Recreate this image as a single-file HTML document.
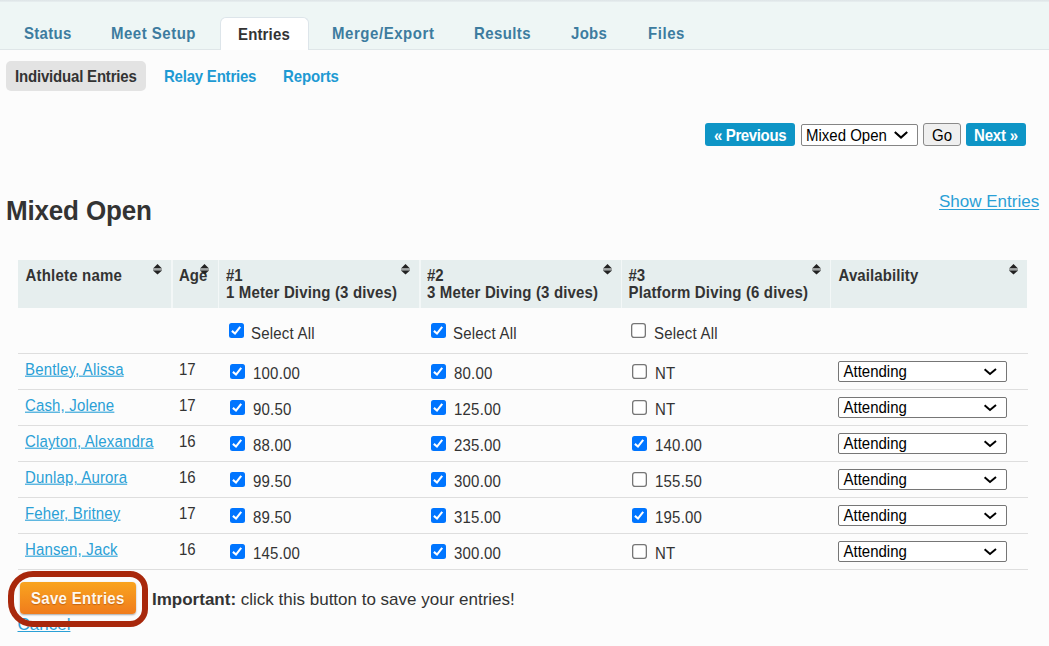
<!DOCTYPE html>
<html><head><meta charset="utf-8">
<style>
*{box-sizing:border-box}
html,body{margin:0;padding:0}
body{width:1049px;height:646px;overflow:hidden;position:relative;background:#fcfcfc;font-family:"Liberation Sans",sans-serif;color:#333;font-size:15px;line-height:17px}
.abs{position:absolute;white-space:nowrap}
.t{position:absolute;white-space:nowrap;transform:scaleY(1.1);transform-origin:0 8.5px}
.b{font-weight:bold}
.tabbar{position:absolute;left:0;top:0;width:1049px;height:50px;background:#eef6f5;border-bottom:1px solid #dfe6e8}
.tabbar:before{content:"";position:absolute;left:0;top:0;width:100%;height:2px;background:linear-gradient(#dde4e6,#e8eff0)}
.tab{font-weight:bold;color:#3d7c9f;letter-spacing:0.3px}
.acttab{position:absolute;left:220px;top:17px;width:89px;height:33px;background:#fff;border:1px solid #dde5ea;border-bottom:none;border-radius:6px 6px 0 0}
.pill{position:absolute;left:6px;top:61px;width:140px;height:30px;background:#e3e3e3;border-radius:5px}
.sub{font-weight:bold;color:#1e9ad3}
.btn{position:absolute;top:123px;height:23px;background:#0e95c6;border-radius:3px}
.wb{color:#fff;font-weight:bold}
.sel{position:absolute;background:#fff;border:1px solid #858585;border-radius:2px}
.k{color:#000}
.h2{font-size:26px;line-height:30px;font-weight:bold;color:#333;letter-spacing:-0.17px;transform:scaleY(1.055);transform-origin:0 6px}
.big{font-size:17px;line-height:20px;transform:none}
a,.lnk{color:#2aa0d6}
.th{position:absolute;top:260px;height:48px;background:#e6eeee}
.sort{position:absolute}
.line{position:absolute;left:18px;width:1010px;height:1px;background:#dedede}
.cb{position:absolute}
.name{color:#2aa0d6;text-decoration:underline;text-underline-offset:0.8px;letter-spacing:0.15px}
.ds{position:absolute;left:838px;width:169px;height:21px;background:#fff;border:1px solid #767676;border-radius:2px}
</style></head>
<body>
<div class="tabbar"></div>
<div class="acttab"></div>

<div class="t tab" style="left:24px;top:24px;">Status</div>
<div class="t tab" style="left:111px;top:24px;letter-spacing:0.5px">Meet Setup</div>
<div class="t tab" style="left:238px;top:25px;color:#333;letter-spacing:0.15px">Entries</div>
<div class="t tab" style="left:332px;top:24px;letter-spacing:0.55px">Merge/Export</div>
<div class="t tab" style="left:474px;top:24px;letter-spacing:0.4px">Results</div>
<div class="t tab" style="left:571px;top:24px;">Jobs</div>
<div class="t tab" style="left:648px;top:24px;letter-spacing:0.55px">Files</div>
<div class="pill"></div>
<div class="t sub" style="left:15px;top:67px;color:#333;letter-spacing:-0.19px">Individual Entries</div>
<div class="t sub" style="left:164px;top:67px;letter-spacing:-0.22px">Relay Entries</div>
<div class="t sub" style="left:283px;top:67px;letter-spacing:-0.12px">Reports</div>
<div class="btn" style="left:705px;width:90px"></div>
<div class="t wb" style="left:714px;top:126px;letter-spacing:-0.37px">« Previous</div>
<div class="sel" style="left:801px;top:124px;width:117px;height:22px"></div>
<div class="t k" style="left:806px;top:126px;">Mixed Open</div>
<svg class="abs" style="left:893px;top:130px" width="16" height="10" viewBox="0 0 16 10"><path d="M1.8 2 L8 7.6 L14.2 2" fill="none" stroke="#000" stroke-width="2.1"/></svg>
<div class="abs" style="left:923px;top:123px;width:38px;height:23px;background:#efefef;border:1px solid #8a8a8a;border-radius:3px"></div>
<div class="t k" style="left:932px;top:126px;">Go</div>
<div class="btn" style="left:966px;width:60px"></div>
<div class="t wb" style="left:974px;top:126px;letter-spacing:-0.2px">Next »</div>
<div class="t h2" style="left:6px;top:195px;">Mixed Open</div>
<div class="t big lnk" style="left:939px;top:192px;text-decoration:underline;text-underline-offset:1.8px">Show Entries</div>
<div class="th" style="left:18px;width:1009px;background:#f3f7f7"></div>
<div class="th" style="left:18px;width:153px"></div>
<div class="th" style="left:173px;width:45px"></div>
<div class="th" style="left:219px;width:200px"></div>
<div class="th" style="left:421px;width:200px"></div>
<div class="th" style="left:622px;width:208px"></div>
<div class="th" style="left:831px;width:196px"></div>
<div class="t b" style="left:25.5px;top:266px;letter-spacing:0.2px">Athlete name</div>
<div class="t b" style="left:179px;top:266px;">Age</div>
<div class="t b" style="left:226px;top:266px;">#1</div>
<div class="t b" style="left:226px;top:283px;letter-spacing:0.15px">1 Meter Diving (3 dives)</div>
<div class="t b" style="left:427px;top:266px;">#2</div>
<div class="t b" style="left:427px;top:283px;letter-spacing:0.15px">3 Meter Diving (3 dives)</div>
<div class="t b" style="left:628.5px;top:266px;">#3</div>
<div class="t b" style="left:628.5px;top:283px;letter-spacing:0.15px">Platform Diving (6 dives)</div>
<div class="t b" style="left:838.5px;top:266px;letter-spacing:0.1px">Availability</div>
<svg class="sort" style="left:153px;top:264px" width="9" height="11" viewBox="0 0 9 11"><path d="M4.5 0 L9 4.4 L0 4.4 Z" fill="#222"/><rect x="0" y="4.4" width="9" height="2.2" fill="#9fa3a3"/><path d="M0 6.6 L9 6.6 L4.5 10.6 Z" fill="#222"/></svg>
<svg class="sort" style="left:200px;top:264px" width="9" height="11" viewBox="0 0 9 11"><path d="M4.5 0 L9 4.4 L0 4.4 Z" fill="#222"/><rect x="0" y="4.4" width="9" height="2.2" fill="#9fa3a3"/><path d="M0 6.6 L9 6.6 L4.5 10.6 Z" fill="#222"/></svg>
<svg class="sort" style="left:401px;top:264px" width="9" height="11" viewBox="0 0 9 11"><path d="M4.5 0 L9 4.4 L0 4.4 Z" fill="#222"/><rect x="0" y="4.4" width="9" height="2.2" fill="#9fa3a3"/><path d="M0 6.6 L9 6.6 L4.5 10.6 Z" fill="#222"/></svg>
<svg class="sort" style="left:603px;top:264px" width="9" height="11" viewBox="0 0 9 11"><path d="M4.5 0 L9 4.4 L0 4.4 Z" fill="#222"/><rect x="0" y="4.4" width="9" height="2.2" fill="#9fa3a3"/><path d="M0 6.6 L9 6.6 L4.5 10.6 Z" fill="#222"/></svg>
<svg class="sort" style="left:812px;top:264px" width="9" height="11" viewBox="0 0 9 11"><path d="M4.5 0 L9 4.4 L0 4.4 Z" fill="#222"/><rect x="0" y="4.4" width="9" height="2.2" fill="#9fa3a3"/><path d="M0 6.6 L9 6.6 L4.5 10.6 Z" fill="#222"/></svg>
<svg class="sort" style="left:1009px;top:264px" width="9" height="11" viewBox="0 0 9 11"><path d="M4.5 0 L9 4.4 L0 4.4 Z" fill="#222"/><rect x="0" y="4.4" width="9" height="2.2" fill="#9fa3a3"/><path d="M0 6.6 L9 6.6 L4.5 10.6 Z" fill="#222"/></svg>
<svg class="cb" style="left:229px;top:323px" width="15" height="15" viewBox="0 0 15 15"><rect x="0" y="0" width="15" height="15" rx="2.5" fill="#0075ff"/><path d="M2.9 7.9 L6.0 10.6 L11.2 3.9" fill="none" stroke="#fff" stroke-width="2.1"/></svg>
<div class="t " style="left:251px;top:324px;letter-spacing:0.2px">Select All</div>
<svg class="cb" style="left:431px;top:323px" width="15" height="15" viewBox="0 0 15 15"><rect x="0" y="0" width="15" height="15" rx="2.5" fill="#0075ff"/><path d="M2.9 7.9 L6.0 10.6 L11.2 3.9" fill="none" stroke="#fff" stroke-width="2.1"/></svg>
<div class="t " style="left:453px;top:324px;letter-spacing:0.2px">Select All</div>
<svg class="cb" style="left:631px;top:323px" width="15" height="15" viewBox="0 0 15 15"><rect x="0.65" y="0.65" width="13.7" height="13.7" rx="2.3" fill="#fff" stroke="#767676" stroke-width="1.3"/></svg>
<div class="t " style="left:654px;top:324px;letter-spacing:0.2px">Select All</div>
<div class="line" style="top:353px"></div>
<div class="line" style="top:389px"></div>
<div class="line" style="top:425px"></div>
<div class="line" style="top:461px"></div>
<div class="line" style="top:497px"></div>
<div class="line" style="top:533px"></div>
<div class="line" style="top:569px"></div>
<div class="t name" style="left:25px;top:360px;">Bentley, Alissa</div>
<div class="t " style="left:179px;top:360px;">17</div>
<svg class="cb" style="left:230px;top:364px" width="15" height="15" viewBox="0 0 15 15"><rect x="0" y="0" width="15" height="15" rx="2.5" fill="#0075ff"/><path d="M2.9 7.9 L6.0 10.6 L11.2 3.9" fill="none" stroke="#fff" stroke-width="2.1"/></svg>
<div class="t " style="left:253px;top:364px;letter-spacing:0.2px">100.00</div>
<svg class="cb" style="left:431px;top:364px" width="15" height="15" viewBox="0 0 15 15"><rect x="0" y="0" width="15" height="15" rx="2.5" fill="#0075ff"/><path d="M2.9 7.9 L6.0 10.6 L11.2 3.9" fill="none" stroke="#fff" stroke-width="2.1"/></svg>
<div class="t " style="left:454px;top:364px;letter-spacing:0.2px">80.00</div>
<svg class="cb" style="left:632px;top:364px" width="15" height="15" viewBox="0 0 15 15"><rect x="0.65" y="0.65" width="13.7" height="13.7" rx="2.3" fill="#fff" stroke="#767676" stroke-width="1.3"/></svg>
<div class="t " style="left:655px;top:364px;letter-spacing:0.2px">NT</div>
<div class="ds" style="top:361px"></div>
<div class="t k" style="left:843.5px;top:362px;">Attending</div>
<svg class="abs" style="left:983px;top:365px" width="16" height="11" viewBox="0 0 16 11"><path d="M1.6 4.3 L7.0 8.9 L13.0 3.9" fill="none" stroke="#000" stroke-width="2"/></svg>
<div class="t name" style="left:25px;top:396px;">Cash, Jolene</div>
<div class="t " style="left:179px;top:396px;">17</div>
<svg class="cb" style="left:230px;top:400px" width="15" height="15" viewBox="0 0 15 15"><rect x="0" y="0" width="15" height="15" rx="2.5" fill="#0075ff"/><path d="M2.9 7.9 L6.0 10.6 L11.2 3.9" fill="none" stroke="#fff" stroke-width="2.1"/></svg>
<div class="t " style="left:253px;top:400px;letter-spacing:0.2px">90.50</div>
<svg class="cb" style="left:431px;top:400px" width="15" height="15" viewBox="0 0 15 15"><rect x="0" y="0" width="15" height="15" rx="2.5" fill="#0075ff"/><path d="M2.9 7.9 L6.0 10.6 L11.2 3.9" fill="none" stroke="#fff" stroke-width="2.1"/></svg>
<div class="t " style="left:454px;top:400px;letter-spacing:0.2px">125.00</div>
<svg class="cb" style="left:632px;top:400px" width="15" height="15" viewBox="0 0 15 15"><rect x="0.65" y="0.65" width="13.7" height="13.7" rx="2.3" fill="#fff" stroke="#767676" stroke-width="1.3"/></svg>
<div class="t " style="left:655px;top:400px;letter-spacing:0.2px">NT</div>
<div class="ds" style="top:397px"></div>
<div class="t k" style="left:843.5px;top:398px;">Attending</div>
<svg class="abs" style="left:983px;top:401px" width="16" height="11" viewBox="0 0 16 11"><path d="M1.6 4.3 L7.0 8.9 L13.0 3.9" fill="none" stroke="#000" stroke-width="2"/></svg>
<div class="t name" style="left:25px;top:432px;">Clayton, Alexandra</div>
<div class="t " style="left:179px;top:432px;">16</div>
<svg class="cb" style="left:230px;top:436px" width="15" height="15" viewBox="0 0 15 15"><rect x="0" y="0" width="15" height="15" rx="2.5" fill="#0075ff"/><path d="M2.9 7.9 L6.0 10.6 L11.2 3.9" fill="none" stroke="#fff" stroke-width="2.1"/></svg>
<div class="t " style="left:253px;top:436px;letter-spacing:0.2px">88.00</div>
<svg class="cb" style="left:431px;top:436px" width="15" height="15" viewBox="0 0 15 15"><rect x="0" y="0" width="15" height="15" rx="2.5" fill="#0075ff"/><path d="M2.9 7.9 L6.0 10.6 L11.2 3.9" fill="none" stroke="#fff" stroke-width="2.1"/></svg>
<div class="t " style="left:454px;top:436px;letter-spacing:0.2px">235.00</div>
<svg class="cb" style="left:632px;top:436px" width="15" height="15" viewBox="0 0 15 15"><rect x="0" y="0" width="15" height="15" rx="2.5" fill="#0075ff"/><path d="M2.9 7.9 L6.0 10.6 L11.2 3.9" fill="none" stroke="#fff" stroke-width="2.1"/></svg>
<div class="t " style="left:655px;top:436px;letter-spacing:0.2px">140.00</div>
<div class="ds" style="top:433px"></div>
<div class="t k" style="left:843.5px;top:434px;">Attending</div>
<svg class="abs" style="left:983px;top:437px" width="16" height="11" viewBox="0 0 16 11"><path d="M1.6 4.3 L7.0 8.9 L13.0 3.9" fill="none" stroke="#000" stroke-width="2"/></svg>
<div class="t name" style="left:25px;top:468px;">Dunlap, Aurora</div>
<div class="t " style="left:179px;top:468px;">16</div>
<svg class="cb" style="left:230px;top:472px" width="15" height="15" viewBox="0 0 15 15"><rect x="0" y="0" width="15" height="15" rx="2.5" fill="#0075ff"/><path d="M2.9 7.9 L6.0 10.6 L11.2 3.9" fill="none" stroke="#fff" stroke-width="2.1"/></svg>
<div class="t " style="left:253px;top:472px;letter-spacing:0.2px">99.50</div>
<svg class="cb" style="left:431px;top:472px" width="15" height="15" viewBox="0 0 15 15"><rect x="0" y="0" width="15" height="15" rx="2.5" fill="#0075ff"/><path d="M2.9 7.9 L6.0 10.6 L11.2 3.9" fill="none" stroke="#fff" stroke-width="2.1"/></svg>
<div class="t " style="left:454px;top:472px;letter-spacing:0.2px">300.00</div>
<svg class="cb" style="left:632px;top:472px" width="15" height="15" viewBox="0 0 15 15"><rect x="0.65" y="0.65" width="13.7" height="13.7" rx="2.3" fill="#fff" stroke="#767676" stroke-width="1.3"/></svg>
<div class="t " style="left:655px;top:472px;letter-spacing:0.2px">155.50</div>
<div class="ds" style="top:469px"></div>
<div class="t k" style="left:843.5px;top:470px;">Attending</div>
<svg class="abs" style="left:983px;top:473px" width="16" height="11" viewBox="0 0 16 11"><path d="M1.6 4.3 L7.0 8.9 L13.0 3.9" fill="none" stroke="#000" stroke-width="2"/></svg>
<div class="t name" style="left:25px;top:504px;">Feher, Britney</div>
<div class="t " style="left:179px;top:504px;">17</div>
<svg class="cb" style="left:230px;top:508px" width="15" height="15" viewBox="0 0 15 15"><rect x="0" y="0" width="15" height="15" rx="2.5" fill="#0075ff"/><path d="M2.9 7.9 L6.0 10.6 L11.2 3.9" fill="none" stroke="#fff" stroke-width="2.1"/></svg>
<div class="t " style="left:253px;top:508px;letter-spacing:0.2px">89.50</div>
<svg class="cb" style="left:431px;top:508px" width="15" height="15" viewBox="0 0 15 15"><rect x="0" y="0" width="15" height="15" rx="2.5" fill="#0075ff"/><path d="M2.9 7.9 L6.0 10.6 L11.2 3.9" fill="none" stroke="#fff" stroke-width="2.1"/></svg>
<div class="t " style="left:454px;top:508px;letter-spacing:0.2px">315.00</div>
<svg class="cb" style="left:632px;top:508px" width="15" height="15" viewBox="0 0 15 15"><rect x="0" y="0" width="15" height="15" rx="2.5" fill="#0075ff"/><path d="M2.9 7.9 L6.0 10.6 L11.2 3.9" fill="none" stroke="#fff" stroke-width="2.1"/></svg>
<div class="t " style="left:655px;top:508px;letter-spacing:0.2px">195.00</div>
<div class="ds" style="top:505px"></div>
<div class="t k" style="left:843.5px;top:506px;">Attending</div>
<svg class="abs" style="left:983px;top:509px" width="16" height="11" viewBox="0 0 16 11"><path d="M1.6 4.3 L7.0 8.9 L13.0 3.9" fill="none" stroke="#000" stroke-width="2"/></svg>
<div class="t name" style="left:25px;top:540px;">Hansen, Jack</div>
<div class="t " style="left:179px;top:540px;">16</div>
<svg class="cb" style="left:230px;top:544px" width="15" height="15" viewBox="0 0 15 15"><rect x="0" y="0" width="15" height="15" rx="2.5" fill="#0075ff"/><path d="M2.9 7.9 L6.0 10.6 L11.2 3.9" fill="none" stroke="#fff" stroke-width="2.1"/></svg>
<div class="t " style="left:253px;top:544px;letter-spacing:0.2px">145.00</div>
<svg class="cb" style="left:431px;top:544px" width="15" height="15" viewBox="0 0 15 15"><rect x="0" y="0" width="15" height="15" rx="2.5" fill="#0075ff"/><path d="M2.9 7.9 L6.0 10.6 L11.2 3.9" fill="none" stroke="#fff" stroke-width="2.1"/></svg>
<div class="t " style="left:454px;top:544px;letter-spacing:0.2px">300.00</div>
<svg class="cb" style="left:632px;top:544px" width="15" height="15" viewBox="0 0 15 15"><rect x="0.65" y="0.65" width="13.7" height="13.7" rx="2.3" fill="#fff" stroke="#767676" stroke-width="1.3"/></svg>
<div class="t " style="left:655px;top:544px;letter-spacing:0.2px">NT</div>
<div class="ds" style="top:541px"></div>
<div class="t k" style="left:843.5px;top:542px;">Attending</div>
<svg class="abs" style="left:983px;top:545px" width="16" height="11" viewBox="0 0 16 11"><path d="M1.6 4.3 L7.0 8.9 L13.0 3.9" fill="none" stroke="#000" stroke-width="2"/></svg>
<div class="abs" style="left:19.5px;top:582px;width:116px;height:32px;border-radius:4px;background:linear-gradient(#f9a41f,#f07c1c);box-shadow:0 1px 2px rgba(0,0,0,.35)"></div>
<div class="t b" style="left:31px;top:588.5px;letter-spacing:0.3px;color:#fff8ee;text-shadow:0 1px 1px rgba(140,55,0,.45)">Save Entries</div>
<div class="t big" style="left:152px;top:590px;"><b>Important:</b> click this button to save your entries!</div>
<div class="t big lnk" style="left:17.5px;top:615px;text-decoration:underline">Cancel</div>
<div class="abs" style="left:7.5px;top:570.5px;width:140px;height:56px;border:6px solid #a8280c;border-radius:25px 18px 18px 25px"></div>
</body></html>
